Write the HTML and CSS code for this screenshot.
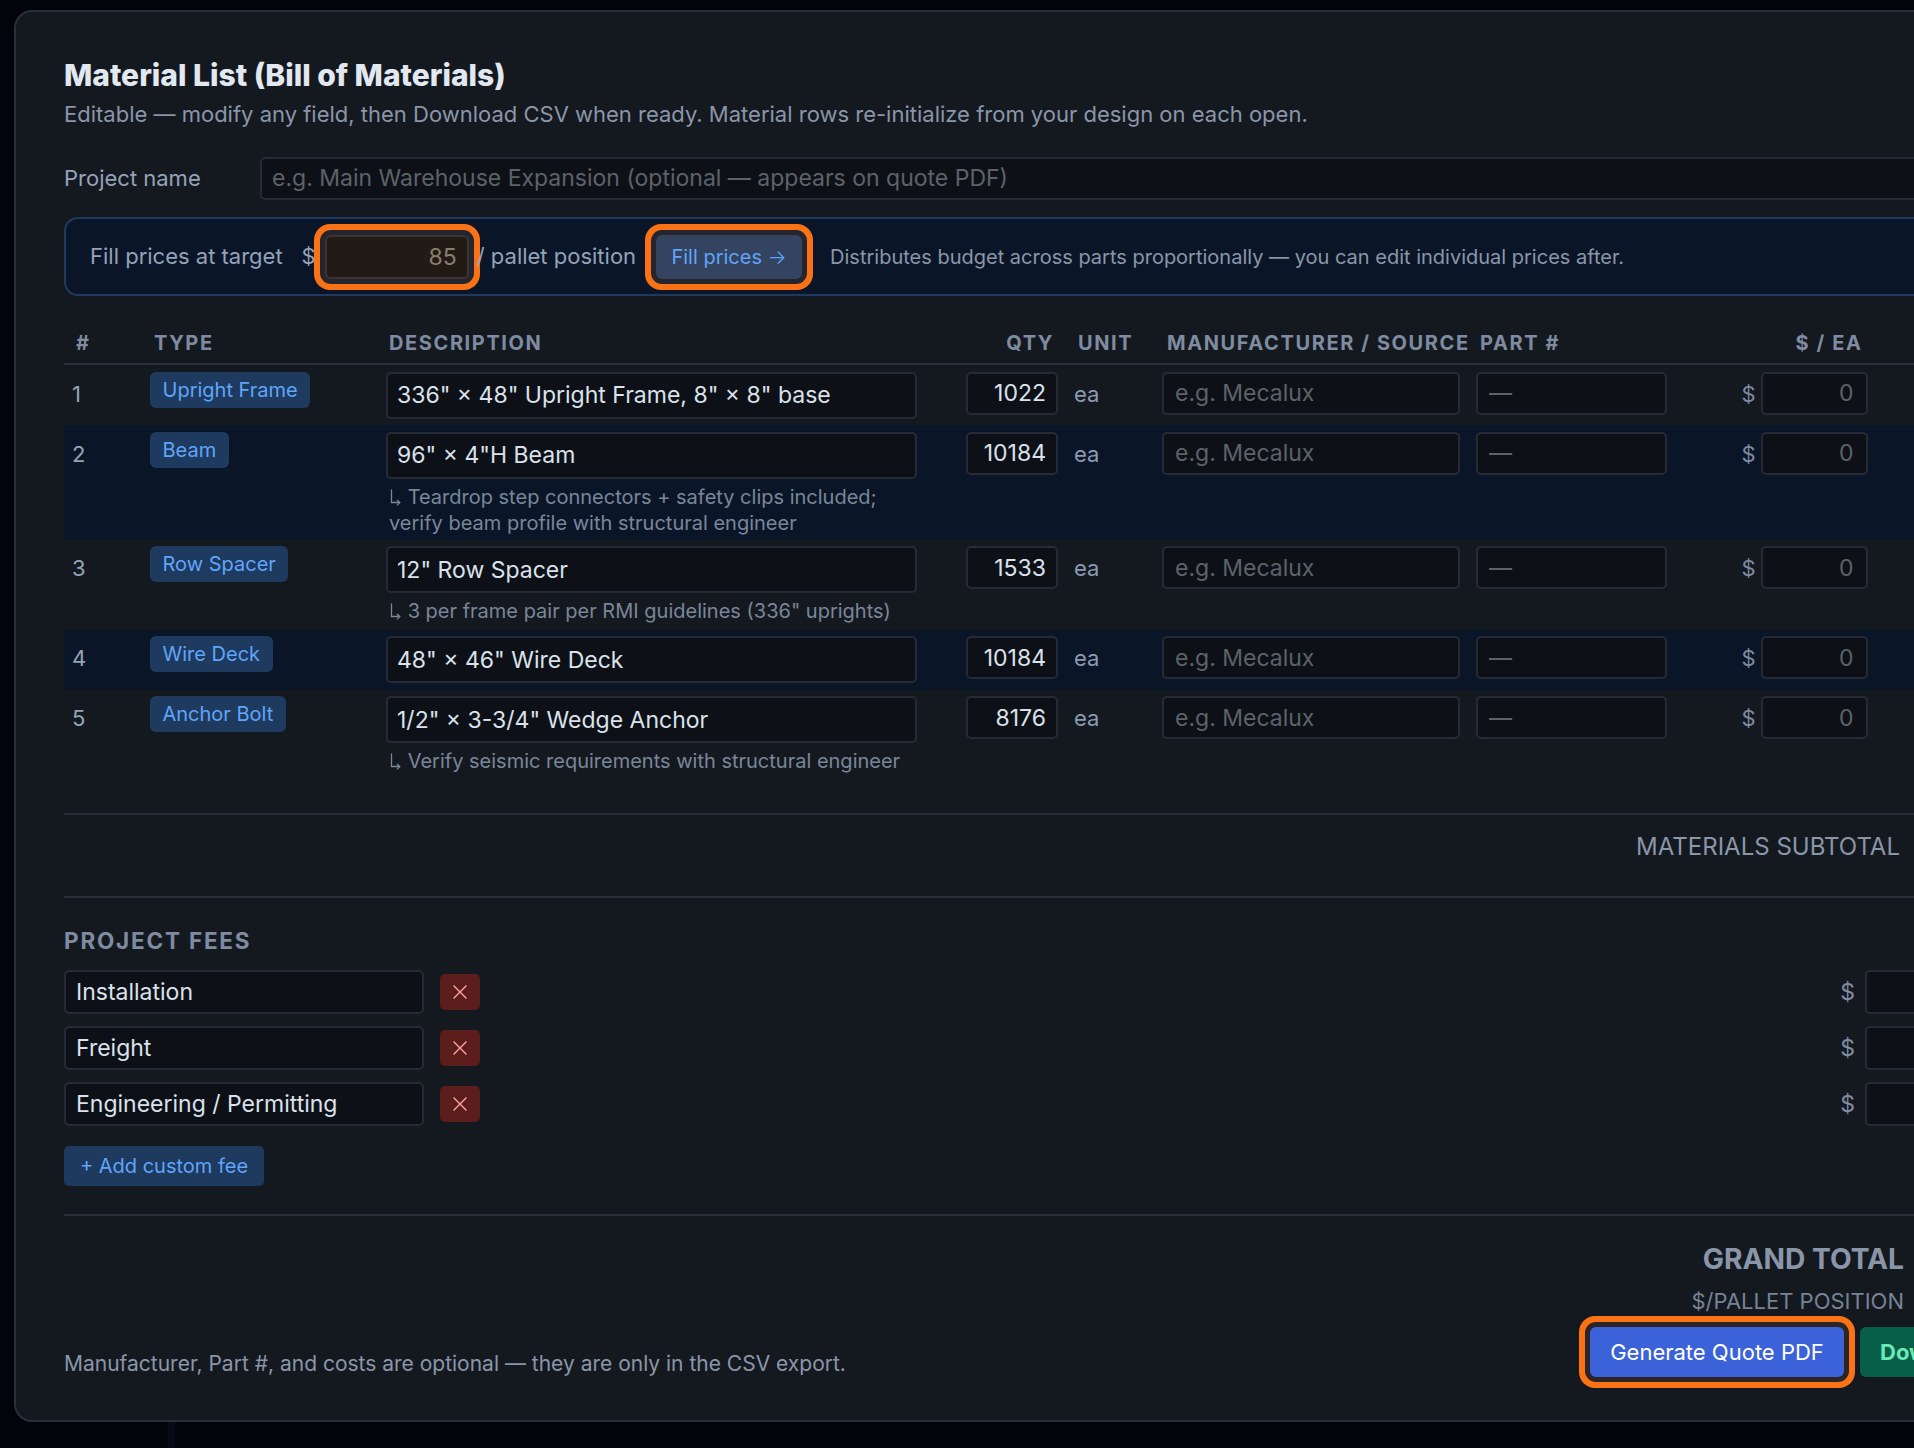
FILE: index.html
```html
<!DOCTYPE html>
<html lang="en">
<head>
    <meta charset="UTF-8">
    <meta name="viewport" content="width=device-width, initial-scale=1.0">
    <title>Material List</title>
    <link rel="stylesheet" href="styles.css">
</head>
<body>
    <div class="page-stripe"></div>
    <div class="panel">
        <h1>Material List (Bill of Materials)</h1>
        <p class="subtitle">Editable — modify any field, then Download CSV when ready. Material rows re-initialize from your design on each open.</p>

        <div class="project-row">
            <label for="project-name">Project name</label>
            <input type="text" id="project-name" class="field" placeholder="e.g. Main Warehouse Expansion (optional — appears on quote PDF)">
        </div>

        <div class="fill-bar">
            <span class="fill-label">Fill prices at target</span>
            <span class="fill-dollar">$</span>
            <input type="text" class="field fill-input ring" value="85">
            <span class="fill-unit">/ pallet position</span>
            <button type="button" class="fill-btn ring">Fill prices <span class="btn-arrow">→</span></button>
            <span class="fill-hint">Distributes budget across parts proportionally — you can edit individual prices after.</span>
        </div>

        <div class="bom-row bom-head">
            <span class="col-num">#</span>
            <span class="col-type">TYPE</span>
            <span class="col-desc">DESCRIPTION</span>
            <span class="col-qty">QTY</span>
            <span class="col-unit">UNIT</span>
            <span class="col-mfr">MANUFACTURER / SOURCE</span>
            <span class="col-part">PART #</span>
            <span class="col-dollar"></span>
            <span class="col-cost">$ / EA</span>
        </div>

        <div class="bom-row">
            <span class="col-num">1</span>
            <div class="col-type"><span class="pill">Upright Frame</span></div>
            <div class="col-desc"><input type="text" class="field desc-input" value='336" × 48" Upright Frame, 8" × 8" base'></div>
            <input type="text" class="field qty-input" value="1022">
            <span class="col-unit">ea</span>
            <input type="text" class="field mfr-input" placeholder="e.g. Mecalux">
            <input type="text" class="field part-input" placeholder="—">
            <span class="col-dollar">$</span>
            <input type="text" class="field cost-input" placeholder="0">
        </div>

        <div class="bom-row alt">
            <span class="col-num">2</span>
            <div class="col-type"><span class="pill">Beam</span></div>
            <div class="col-desc">
                <input type="text" class="field desc-input" value='96" × 4"H Beam'>
                <p class="note note-wrap"><svg class="note-arrow" viewBox="0 0 13 18" width="13" height="18"><path d="M2.5.5v13h8M8 11l2.8 2.6L8 16.4"/></svg> Teardrop step connectors + safety clips included; verify beam profile with structural engineer</p>
            </div>
            <input type="text" class="field qty-input" value="10184">
            <span class="col-unit">ea</span>
            <input type="text" class="field mfr-input" placeholder="e.g. Mecalux">
            <input type="text" class="field part-input" placeholder="—">
            <span class="col-dollar">$</span>
            <input type="text" class="field cost-input" placeholder="0">
        </div>

        <div class="bom-row">
            <span class="col-num">3</span>
            <div class="col-type"><span class="pill">Row Spacer</span></div>
            <div class="col-desc">
                <input type="text" class="field desc-input" value='12" Row Spacer'>
                <p class="note"><svg class="note-arrow" viewBox="0 0 13 18" width="13" height="18"><path d="M2.5.5v13h8M8 11l2.8 2.6L8 16.4"/></svg> 3 per frame pair per RMI guidelines (336" uprights)</p>
            </div>
            <input type="text" class="field qty-input" value="1533">
            <span class="col-unit">ea</span>
            <input type="text" class="field mfr-input" placeholder="e.g. Mecalux">
            <input type="text" class="field part-input" placeholder="—">
            <span class="col-dollar">$</span>
            <input type="text" class="field cost-input" placeholder="0">
        </div>

        <div class="bom-row alt">
            <span class="col-num">4</span>
            <div class="col-type"><span class="pill">Wire Deck</span></div>
            <div class="col-desc"><input type="text" class="field desc-input" value='48" × 46" Wire Deck'></div>
            <input type="text" class="field qty-input" value="10184">
            <span class="col-unit">ea</span>
            <input type="text" class="field mfr-input" placeholder="e.g. Mecalux">
            <input type="text" class="field part-input" placeholder="—">
            <span class="col-dollar">$</span>
            <input type="text" class="field cost-input" placeholder="0">
        </div>

        <div class="bom-row">
            <span class="col-num">5</span>
            <div class="col-type"><span class="pill">Anchor Bolt</span></div>
            <div class="col-desc">
                <input type="text" class="field desc-input" value='1/2" × 3-3/4" Wedge Anchor'>
                <p class="note"><svg class="note-arrow" viewBox="0 0 13 18" width="13" height="18"><path d="M2.5.5v13h8M8 11l2.8 2.6L8 16.4"/></svg> Verify seismic requirements with structural engineer</p>
            </div>
            <input type="text" class="field qty-input" value="8176">
            <span class="col-unit">ea</span>
            <input type="text" class="field mfr-input" placeholder="e.g. Mecalux">
            <input type="text" class="field part-input" placeholder="—">
            <span class="col-dollar">$</span>
            <input type="text" class="field cost-input" placeholder="0">
        </div>

        <div class="subtotal-row">
            <span class="subtotal-label">MATERIALS SUBTOTAL</span>
        </div>

        <div class="fees">
            <h2>PROJECT FEES</h2>
            <div class="fee-row">
                <input type="text" class="field fee-input" value="Installation">
                <button type="button" class="fee-remove">
                    <svg viewBox="0 0 16 16" width="16" height="16"><path d="M1.5 1.5l13 13M14.5 1.5l-13 13"/></svg>
                </button>
                <span class="fee-dollar">$</span>
                <input type="text" class="field fee-amount">
            </div>
            <div class="fee-row">
                <input type="text" class="field fee-input" value="Freight">
                <button type="button" class="fee-remove">
                    <svg viewBox="0 0 16 16" width="16" height="16"><path d="M1.5 1.5l13 13M14.5 1.5l-13 13"/></svg>
                </button>
                <span class="fee-dollar">$</span>
                <input type="text" class="field fee-amount">
            </div>
            <div class="fee-row">
                <input type="text" class="field fee-input" value="Engineering / Permitting">
                <button type="button" class="fee-remove">
                    <svg viewBox="0 0 16 16" width="16" height="16"><path d="M1.5 1.5l13 13M14.5 1.5l-13 13"/></svg>
                </button>
                <span class="fee-dollar">$</span>
                <input type="text" class="field fee-amount">
            </div>
            <button type="button" class="add-fee">+ Add custom fee</button>
        </div>

        <div class="totals">
            <div class="grand-total">GRAND TOTAL</div>
            <div class="per-pallet">$/PALLET POSITION</div>
        </div>

        <div class="footer">
            <p class="footer-note">Manufacturer, Part #, and costs are optional — they are only in the CSV export.</p>
            <div class="footer-actions">
                <button type="button" class="btn-pdf ring">Generate Quote PDF</button>
                <button type="button" class="btn-csv">Download CSV</button>
            </div>
        </div>
    </div>
</body>
</html>
```

FILE: styles.css
```css
* {
    box-sizing: border-box;
}
html, body {
    height: 1448px;
    overflow: hidden;
}
body {
    margin: 0;
    padding: 10px 0 0 14px;
    background-color: #03030c;
    font-family: 'Inter', 'Liberation Sans', sans-serif;
    position: relative;
}
.page-stripe {
    position: absolute;
    left: 168px;
    top: 1400px;
    width: 7px;
    height: 48px;
    background-color: #070b18;
}
.panel {
    position: relative;
    width: 2300px;
    height: 1412px;
    padding: 45px 48px 0;
    background-color: #141920;
    border: 2px solid #2a2f3c;
    border-radius: 18px;
}
h1 {
    margin: 0;
    font-size: 30px;
    line-height: 36px;
    font-weight: 800;
    color: #e2e8f0;
}
.subtitle {
    margin: 8px 0 0;
    font-size: 22px;
    line-height: 26px;
    color: #8a96a8;
}
.field {
    display: block;
    background-color: #0d1117;
    border: 2px solid #252a36;
    border-radius: 5px;
    font-family: inherit;
    color: #dbe2ec;
    outline: none;
}
.field::placeholder {
    color: #5d6269;
    opacity: 1;
}
.project-row {
    display: flex;
    align-items: center;
    margin-top: 30px;
}
.project-row label {
    width: 196px;
    margin-bottom: 2px;
    font-size: 22px;
    color: #94a3b8;
}
.project-row .field {
    flex: 1;
    height: 43px;
    padding: 0 10px 2px;
    font-size: 23px;
}
.fill-bar {
    display: flex;
    align-items: center;
    height: 79px;
    margin-top: 17px;
    padding-left: 24px;
    background-color: #0a1628;
    border: 2px solid #1e3a5f;
    border-radius: 14px;
    font-size: 22px;
    color: #94a3b8;
}
.fill-label, .fill-dollar, .fill-unit {
    margin-bottom: 2px;
}
.fill-dollar {
    margin-left: 19px;
}
.fill-input {
    width: 144px;
    height: 44px;
    margin-left: 9px;
    padding: 0 10px;
    background-color: #221a14;
    border-color: #3a3532;
    font-size: 23px;
    text-align: right;
    color: #8b7d6f;
}
.ring {
    box-shadow: 0 0 0 5px #25252f, 0 0 0 11px #f97316;
    border-radius: 6px;
}
.fill-unit {
    margin-left: 8px;
}
.fill-btn {
    width: 146px;
    height: 44px;
    margin-left: 20px;
    padding: 0;
    background-color: #334360;
    border: none;
    font-family: inherit;
    font-size: 20px;
    color: #60a5fa;
}
.btn-arrow {
    font-weight: 300;
}
.fill-hint {
    margin-left: 28px;
    font-size: 20px;
    color: #8a96a8;
}
.bom-row {
    display: grid;
    grid-template-columns: 86px 236px 531px 141px 104px 298px 207px 93.5px 107px;
    align-items: start;
    padding: 6.5px 0;
    font-size: 22px;
}
.bom-row .col-num {
    padding: 9px 0 0 8px;
    color: #94a3b8;
}
.bom-row.alt {
    background-color: #0a1628;
}
.bom-row.bom-head {
    margin-top: 29px;
    padding: 6px 0 8px;
    border-bottom: 2px solid #2a2f3c;
    font-size: 20px;
    line-height: 24px;
    font-weight: 700;
    letter-spacing: 0.08em;
    color: #7f8ba0;
}
.bom-row.bom-head .col-num {
    padding: 0 0 0 12px;
    color: #7f8ba0;
}
.bom-head .col-type {
    padding-left: 4px;
}
.bom-head .col-desc {
    padding-left: 3px;
}
.bom-head .col-qty {
    padding-right: 4px;
    text-align: right;
}
.bom-row.bom-head .col-unit {
    padding: 0 0 0 20px;
    color: #7f8ba0;
}
.bom-head .col-mfr {
    padding-left: 5px;
    white-space: nowrap;
}
.bom-head .col-part {
    padding-left: 20px;
}
.bom-head .col-cost {
    padding-right: 5px;
    text-align: right;
    white-space: nowrap;
}
.pill {
    display: inline-block;
    height: 36px;
    padding: 0 12.5px;
    background-color: #1e3a5f;
    border-radius: 6px;
    font-size: 20px;
    line-height: 36px;
    color: #60a5fa;
}
.desc-input {
    width: 531px;
    height: 47px;
    padding: 0 9px;
    font-size: 23px;
}
.note {
    width: 520px;
    margin: 5px 0 -1px 3px;
    font-size: 20px;
    line-height: 26px;
    color: #7a8699;
}
.note-wrap {
    margin-bottom: -2.5px;
}
.note-arrow {
    vertical-align: -3px;
    fill: none;
    stroke: #7a8699;
    stroke-width: 1.3;
}
.qty-input {
    justify-self: end;
    width: 92px;
    height: 43px;
    padding: 0 10px;
    font-size: 23px;
    text-align: right;
}
.col-unit {
    padding: 9px 0 0 16px;
    color: #8b9ab0;
}
.mfr-input {
    width: 100%;
    height: 43px;
    padding: 0 11px;
    font-size: 23px;
}
.part-input {
    width: 191px;
    height: 43px;
    margin-left: 16px;
    padding: 0 11px;
    font-size: 23px;
}
.col-dollar {
    padding-top: 9px;
    padding-right: 5px;
    text-align: right;
    color: #7f8ba0;
}
.cost-input {
    width: 107px;
    height: 43px;
    padding: 0 12px;
    font-size: 23px;
    text-align: right;
}
.subtotal-row {
    margin-top: 33px;
    padding: 9px 364px 26px 0;
    border-top: 2px solid #2a2f3c;
    border-bottom: 2px solid #2a2f3c;
    text-align: right;
    font-size: 24px;
    line-height: 46px;
    color: #8a96a8;
}
.fees {
    padding-bottom: 28px;
    border-bottom: 2px solid #2a2f3c;
}
.fees h2 {
    margin: 30px 0 0;
    font-size: 22.5px;
    line-height: 26px;
    font-weight: 700;
    letter-spacing: 0.08em;
    color: #7f8ba0;
}
.fee-row {
    display: flex;
    align-items: center;
    width: 1931px;
    margin-top: 12px;
}
.fees h2 + .fee-row {
    margin-top: 16px;
}
.fee-input {
    width: 360px;
    height: 44px;
    padding: 0 10px;
    font-size: 23px;
}
.fee-remove {
    display: flex;
    align-items: center;
    justify-content: center;
    width: 40px;
    height: 36px;
    margin-left: 16px;
    padding: 0;
    background-color: #5c1d1d;
    border: none;
    border-radius: 5px;
}
.fee-remove svg {
    fill: none;
    stroke: #fca5a5;
    stroke-width: 1.4;
}
.fee-dollar {
    margin-left: auto;
    margin-right: 10px;
    font-size: 23px;
    color: #7f8ba0;
}
.fee-amount {
    width: 130px;
    height: 44px;
}
.add-fee {
    display: block;
    width: 200px;
    height: 40px;
    margin-top: 20px;
    padding: 0;
    background-color: #1e3a5f;
    border: none;
    border-radius: 5px;
    font-family: inherit;
    font-size: 20px;
    color: #60a5fa;
}
.totals {
    width: 1840px;
    text-align: right;
}
.grand-total {
    margin-top: 28px;
    font-size: 28.2px;
    line-height: 30px;
    font-weight: 700;
    color: #8a96a8;
}
.per-pallet {
    margin-top: 14px;
    font-size: 22px;
    line-height: 26px;
    color: #768295;
}
.footer {
    display: flex;
    align-items: flex-end;
    margin-top: 13px;
}
.footer-note {
    width: 1526px;
    margin: 0;
    font-size: 21px;
    line-height: 26px;
    color: #8a96a8;
}
.footer-actions {
    display: flex;
    gap: 16px;
}
.btn-pdf, .btn-csv {
    height: 50px;
    padding: 0 20px;
    border: none;
    border-radius: 6px;
    font-family: inherit;
    font-size: 22px;
    white-space: nowrap;
}
.btn-pdf {
    width: 254px;
    background-color: #3b62d9;
    color: #ffffff;
    box-shadow: 0 0 0 5px #2d2426, 0 0 0 11px #f97316;
}
.btn-csv {
    background-color: #065f46;
    font-weight: 700;
    color: #6ee7b7;
}
```
